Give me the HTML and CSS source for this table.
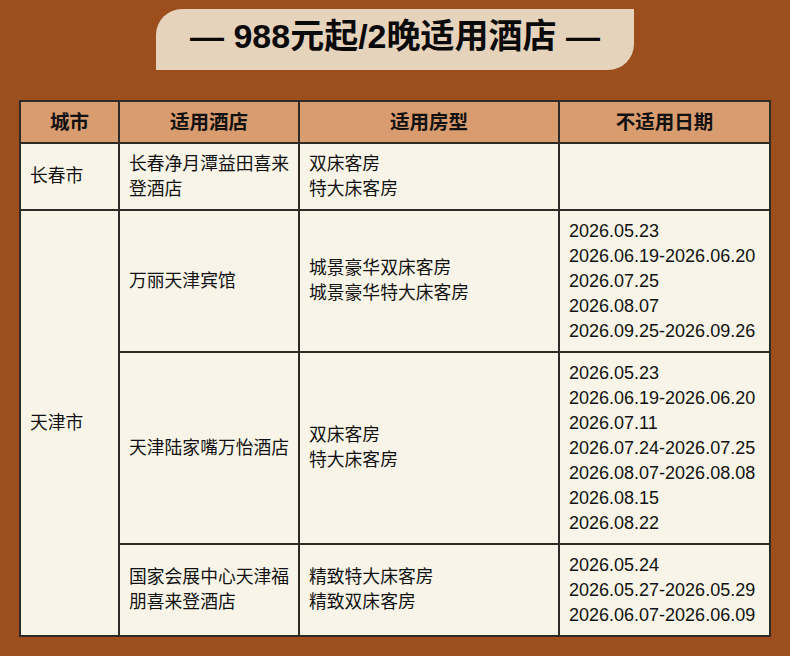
FILE: index.html
```html
<!DOCTYPE html>
<html lang="zh">
<head>
<meta charset="utf-8">
<link rel="stylesheet" href="styles.css">
</head>
<body>
<div class="page">
  <div class="banner">— 988元起/2晚适用酒店 —</div>
  <table class="hotels">
    <colgroup>
      <col class="c1"><col class="c2"><col class="c3"><col class="c4">
    </colgroup>
    <thead>
      <tr><th>城市</th><th>适用酒店</th><th>适用房型</th><th>不适用日期</th></tr>
    </thead>
    <tbody>
      <tr>
        <td>长春市</td>
        <td>长春净月潭益田喜来<br>登酒店</td>
        <td>双床客房<br>特大床客房</td>
        <td></td>
      </tr>
      <tr>
        <td rowspan="3">天津市</td>
        <td>万丽天津宾馆</td>
        <td>城景豪华双床客房<br>城景豪华特大床客房</td>
        <td class="dates">2026.05.23<br>2026.06.19-2026.06.20<br>2026.07.25<br>2026.08.07<br>2026.09.25-2026.09.26</td>
      </tr>
      <tr>
        <td>天津陆家嘴万怡酒店</td>
        <td>双床客房<br>特大床客房</td>
        <td class="dates">2026.05.23<br>2026.06.19-2026.06.20<br>2026.07.11<br>2026.07.24-2026.07.25<br>2026.08.07-2026.08.08<br>2026.08.15<br>2026.08.22</td>
      </tr>
      <tr>
        <td>国家会展中心天津福<br>朋喜来登酒店</td>
        <td>精致特大床客房<br>精致双床客房</td>
        <td class="dates">2026.05.24<br>2026.05.27-2026.05.29<br>2026.06.07-2026.06.09</td>
      </tr>
    </tbody>
  </table>
</div>
</body>
</html>
```
FILE: styles.css
```css
html, body {
  margin: 0;
  padding: 0;
  background: #9c4f1c;
}
.page {
  width: 790px;
  height: 656px;
  box-sizing: border-box;
  padding-top: 9px;
  display: flex;
  flex-direction: column;
  align-items: center;
  font-family: "Liberation Sans", "Noto Sans CJK SC", sans-serif;
  color: #111;
}
.banner {
  width: 478px;
  height: 61px;
  box-sizing: border-box;
  background: #e6d3bc;
  border-radius: 26px 0 26px 0;
  display: flex;
  align-items: center;
  justify-content: center;
  font-size: 34px;
  font-weight: bold;
  color: #0a0a0a;
  padding-bottom: 8px;
  line-height: 1;
}
.hotels {
  margin-top: 30px;
  width: 752px;
  border-collapse: collapse;
  table-layout: fixed;
  font-size: 17.8px;
  line-height: 25px;
}
.c1 { width: 99px; }
.c2 { width: 180px; }
.c3 { width: 260px; }
.c4 { width: 211px; }
.hotels th, .hotels td {
  border: 2px solid #2e2a26;
}
.hotels th {
  background: #d99c6e;
  font-size: 19.5px;
  font-weight: bold;
  height: 40px;
  padding: 0;
  text-align: center;
}
.hotels td {
  background: #f8f5e8;
  padding: 7.5px 8px 7.5px 9px;
  text-align: left;
  vertical-align: middle;
  white-space: nowrap;
}
.hotels td.dates {
  font-size: 18px;
}
```
